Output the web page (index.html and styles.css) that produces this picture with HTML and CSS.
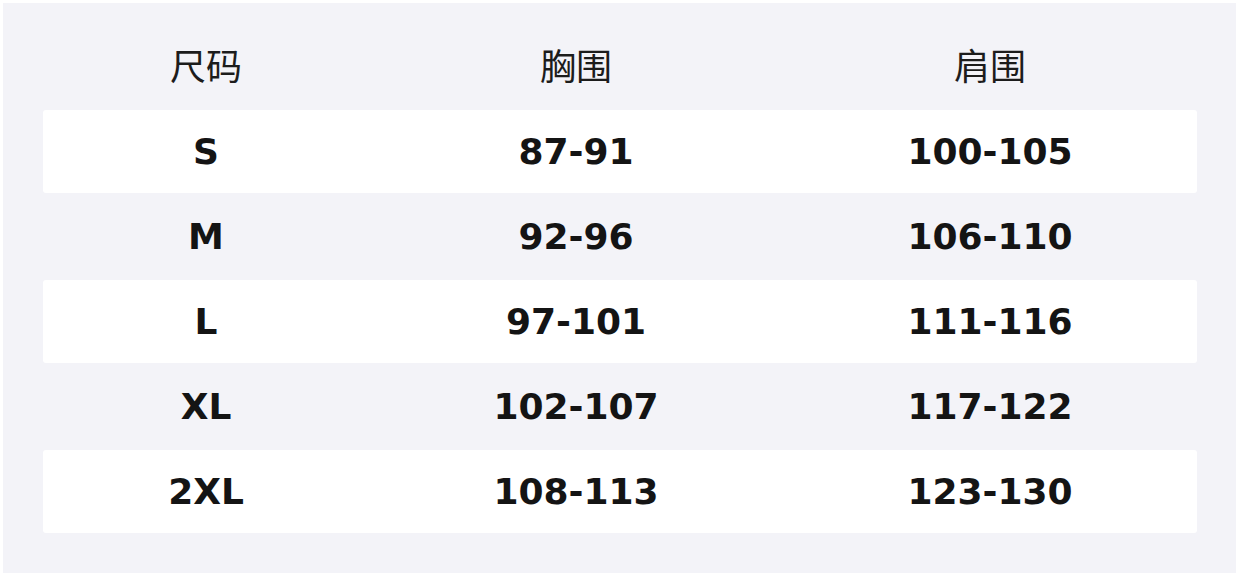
FILE: index.html
```html
<!DOCTYPE html>
<html lang="zh">
<head>
<meta charset="utf-8">
<title>尺码表</title>
<link rel="stylesheet" href="styles.css">
</head>
<body>
<div class="card">
  <div class="row head">
    <div class="cell">尺码</div>
    <div class="cell">胸围</div>
    <div class="cell">肩围</div>
  </div>
  <div class="row odd">
    <div class="cell">S</div>
    <div class="cell">87-91</div>
    <div class="cell">100-105</div>
  </div>
  <div class="row">
    <div class="cell">M</div>
    <div class="cell">92-96</div>
    <div class="cell">106-110</div>
  </div>
  <div class="row odd">
    <div class="cell">L</div>
    <div class="cell">97-101</div>
    <div class="cell">111-116</div>
  </div>
  <div class="row">
    <div class="cell">XL</div>
    <div class="cell">102-107</div>
    <div class="cell">117-122</div>
  </div>
  <div class="row odd">
    <div class="cell">2XL</div>
    <div class="cell">108-113</div>
    <div class="cell">123-130</div>
  </div>
</div>
</body>
</html>
```
FILE: styles.css
```css
html, body {
  margin: 0;
  padding: 0;
  background: #ffffff;
}
body {
  padding: 3px 4px 5px 3px;
}
.card {
  background: #f3f3f8;
  padding: 20px 39px 40px 40px;
  display: flex;
  flex-direction: column;
  gap: 2px;
  height: 570px;
  box-sizing: border-box;
}
.row {
  display: grid;
  grid-template-columns: 326px 414px 414px;
  height: 83px;
  align-items: center;
  border-radius: 3px;
  font-family: "DejaVu Sans", sans-serif;
  font-weight: bold;
  font-size: 36px;
  color: #141414;
}
.row.odd {
  background: #ffffff;
}
.row.head {
  height: 85px;
  font-family: "Noto Sans CJK SC", "Noto Sans", sans-serif;
  font-weight: normal;
  font-size: 36px;
  color: #1c1c1c;
  padding-bottom: 4px;
  box-sizing: border-box;
}
.cell {
  text-align: center;
  line-height: 1;
}
```
